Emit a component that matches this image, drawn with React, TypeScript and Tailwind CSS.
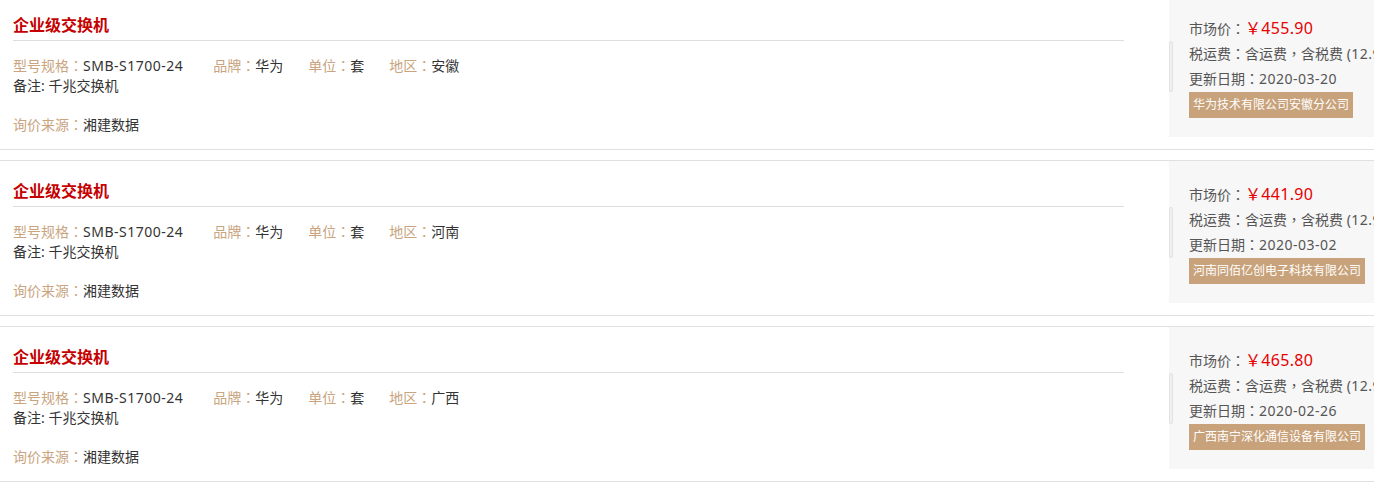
import React from "react";

type Item = {
  region: string;
  price: string;
  date: string;
  company: string;
};

const items: Item[] = [
  { region: "安徽", price: "455.90", date: "2020-03-20", company: "华为技术有限公司安徽分公司" },
  { region: "河南", price: "441.90", date: "2020-03-02", company: "河南同佰亿创电子科技有限公司" },
  { region: "广西", price: "465.80", date: "2020-02-26", company: "广西南宁深化通信设备有限公司" },
];

const font = { fontFamily: '"Noto Sans", "Noto Sans CJK SC", sans-serif' };

function P({ c }: { c: string }) {
  return <span className="font-['Noto_Sans_CJK_TC',sans-serif] leading-[0]">{c}</span>;
}

function Row({ item }: { item: Item }) {
  return (
    <div className="flex border-y border-[#e0e0e0] mb-[10px] first:-mt-[6px]">
      <div className="w-[1124px] shrink-0 pl-[13px] pb-[14px]">
        <div className="pt-[18px] pb-[3px] border-b border-[#dddddd] text-[16px] leading-[24px] font-bold text-[#c40000]">
          企业级交换机
        </div>
        <div className="mt-[15px] h-[20px] text-[14px] leading-[20px] flex whitespace-nowrap">
          <span className="mr-[30px]">
            <span className="text-[#c9a47e]">型号规格<P c="：" /></span>
            <span className="text-[#333] tracking-[0.5px]">SMB-S1700-24</span>
          </span>
          <span className="mr-[25px]">
            <span className="text-[#c9a47e]">品牌<P c="：" /></span>
            <span className="text-[#333]">华为</span>
          </span>
          <span className="mr-[25px]">
            <span className="text-[#c9a47e]">单位<P c="：" /></span>
            <span className="text-[#333]">套</span>
          </span>
          <span>
            <span className="text-[#c9a47e]">地区<P c="：" /></span>
            <span className="text-[#333]">{item.region}</span>
          </span>
        </div>
        <div className="h-[19px] text-[14px] leading-[19px] text-[#333]">备注: 千兆交换机</div>
        <div className="mt-[20px] h-[20px] text-[14px] leading-[20px]">
          <span className="text-[#c9a47e]">询价来源<P c="：" /></span>
          <span className="text-[#333]">湘建数据</span>
        </div>
      </div>
      <div className="ml-[45px] w-[270px] shrink-0 self-start h-[142px] bg-[#f7f7f7] relative pl-[20px] pt-[21px] whitespace-nowrap text-[14px] leading-[25px] text-[#555]">
        <div className="absolute left-0 top-[46px] w-[4px] h-[51px] bg-[#f0f0f0] border border-[#e2e2e2] rounded-[2px]" />
        <div className="h-[25px]">
          市场价<P c="：" />
          <span className="text-[16px] text-[#e60000] tracking-[0.3px]">￥{item.price}</span>
        </div>
        <div className="h-[25px]">
          税运费<P c="：" />含运费<P c="，" />含税费 <span className="tracking-[0.5px]">(12.9%)</span>
        </div>
        <div className="h-[25px]">
          更新日期<P c="：" />
          <span className="tracking-[0.5px]">{item.date}</span>
        </div>
        <div className="inline-block bg-[#c8a27a] text-white text-[12px] leading-[26px] px-[4px]">
          {item.company}
        </div>
      </div>
    </div>
  );
}

export default function App() {
  return (
    <div className="w-full h-[487px] overflow-hidden bg-white" style={font}>
      <div className="w-[1440px]">
        {items.map((it, i) => (
          <Row key={i} item={it} />
        ))}
      </div>
    </div>
  );
}
